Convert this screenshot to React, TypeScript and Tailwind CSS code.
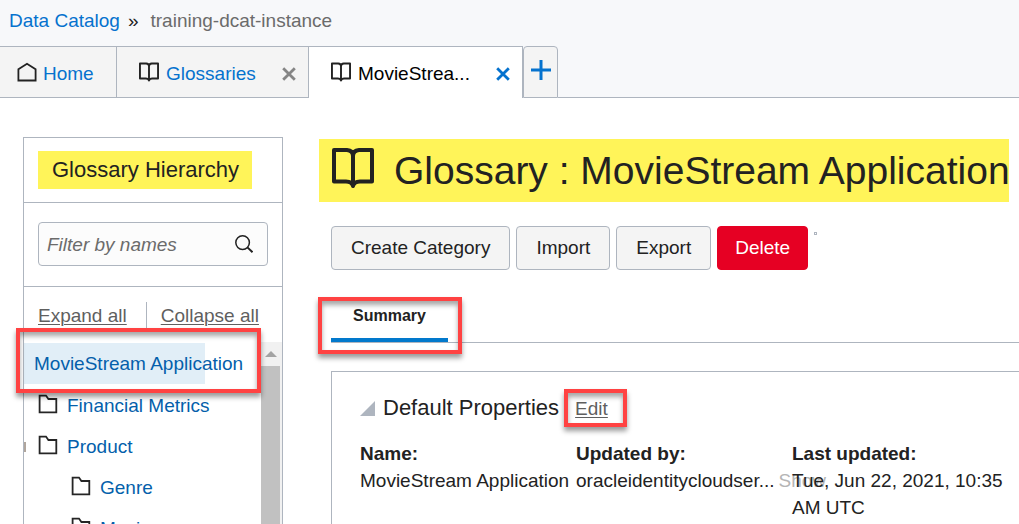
import type { ReactNode } from 'react';

function BookIcon({ className }: { className: string }) {
  return (
    <svg viewBox="0 0 42 40" className={className} fill="none" stroke="currentColor" strokeWidth="4" strokeLinejoin="round" strokeLinecap="round" aria-hidden="true">
      <path d="M2 2H15Q21 2.5 21 8Q21 2.5 27 2H40V33.5H28Q22 33.5 21 38Q20 33.5 14 33.5H2ZM21 8V37" />
    </svg>
  );
}

function HomeIcon() {
  return (
    <svg viewBox="0 0 20 20" className="mb-1 size-5 shrink-0" fill="none" stroke="currentColor" strokeWidth="1.8" aria-hidden="true">
      <path d="M1.4 18.5V7.2L10 1.8L18.6 7.2V18.5Z" />
    </svg>
  );
}

function FolderIcon() {
  return (
    <svg viewBox="0 0 20 20" className="mb-1 size-5 shrink-0 text-[#252525]" fill="none" stroke="currentColor" strokeWidth="1.8" aria-hidden="true">
      <path d="M1.6 18.4V1.6H8L10.4 5H18.3V18.4Z" />
    </svg>
  );
}

function SearchIcon() {
  return (
    <svg viewBox="0 0 18 18" className="size-[18px]" fill="none" stroke="currentColor" strokeWidth="1.5" aria-hidden="true">
      <circle cx="7.6" cy="7.6" r="6.8" />
      <path d="M12.4 12.4L17.5 17.2" strokeWidth="1.9" />
    </svg>
  );
}

function CrossIcon({ className }: { className: string }) {
  return (
    <svg viewBox="0 0 14 14" className={className} fill="none" stroke="currentColor" strokeWidth="2.8" aria-hidden="true">
      <path d="M1.2 1.2L12.8 12.8M12.8 1.2L1.2 12.8" />
    </svg>
  );
}

function Callout({ className }: { className: string }) {
  return (
    <span
      aria-hidden="true"
      className={`pointer-events-none absolute z-10 border-4 border-[#ff4242] shadow-[0_4px_5px_rgba(0,0,0,0.4),inset_0_4px_5px_rgba(0,0,0,0.35)] ${className}`}
    />
  );
}

function TreeRow({ label, nested }: { label: string; nested?: boolean }) {
  return (
    <li className={`flex h-[41px] items-center gap-[9px] ${nested ? 'pl-[47px]' : 'pl-[14px]'}`}>
      <FolderIcon />
      <a href="#" className="whitespace-nowrap text-[#045fab]">{label}</a>
    </li>
  );
}

function ActionButton({ children, danger }: { children: ReactNode; danger?: boolean }) {
  return (
    <button
      type="button"
      className={`h-11 rounded border pb-[2px] whitespace-nowrap ${danger ? 'border-[#e60023] bg-[#e60023] px-[17px] text-white' : 'border-[#aeb5bf] bg-[#f4f4f4] px-[19px]'}`}
    >
      {children}
    </button>
  );
}

function Header() {
  return (
    <header className="bg-[#f7f8fa]">
      <nav aria-label="Breadcrumb" className="flex h-[46px] items-start gap-2 pt-[7px] pl-[9px] leading-[27px]">
        <a href="#" className="text-[#0572ce]">Data Catalog</a>
        <span>»</span>
        <span className="ml-1 text-[#6b6b6b]">training-dcat-instance</span>
      </nav>
      <div className="flex h-[52px]">
        <div className="flex w-[117px] items-center gap-[6px] border-y border-r border-[#aeb5bf] bg-[#f4f4f4] pt-[3px] pl-[17px]">
          <HomeIcon />
          <a href="#" className="text-[#0572ce]">Home</a>
        </div>
        <div className="flex w-48 items-center border-y border-r border-[#aeb5bf] bg-[#f4f4f4] pt-[3px] pr-3 pl-[22px]">
          <BookIcon className="mb-1 h-5 w-5 shrink-0" />
          <a href="#" className="ml-[7px] text-[#0572ce]">Glossaries</a>
          <button type="button" aria-label="Close Glossaries" className="ml-auto text-[#858585]">
            <CrossIcon className="size-[14px]" />
          </button>
        </div>
        <div className="flex w-[214px] items-center border-t border-r border-[#aeb5bf] bg-white pt-[2px] pr-3 pl-[22px]">
          <BookIcon className="mb-1 h-5 w-5 shrink-0" />
          <a href="#" className="ml-[7px] text-black">MovieStrea...</a>
          <button type="button" aria-label="Close MovieStream Application" className="ml-auto text-[#0572ce]">
            <CrossIcon className="size-[14px]" />
          </button>
        </div>
        <button
          type="button"
          aria-label="New tab"
          className="flex w-[35px] justify-center rounded-t border border-[#aeb5bf] bg-[#f4f4f4] pt-[13px] text-[#0572ce]"
        >
          <svg viewBox="0 0 20 20" className="size-5" stroke="currentColor" strokeWidth="3" aria-hidden="true">
            <path d="M10 0V20M0 10H20" />
          </svg>
        </button>
        <div className="flex-1 border-b border-[#aeb5bf]" />
      </div>
    </header>
  );
}

function Sidebar() {
  return (
    <aside className="mt-[39px] flex w-[260px] shrink-0 flex-col border-x border-t border-[#aeb5bf]">
      <div className="border-b border-[#aeb5bf] px-[14px] py-[13px]">
        <h2 className="inline-block h-[38px] bg-[#fff459] pr-[13px] pl-[14px] text-[22px] leading-[38px] whitespace-nowrap align-top">
          Glossary Hierarchy
        </h2>
      </div>
      <div className="border-b border-[#aeb5bf] px-[14px] pt-[19px] pb-5">
        <div className="flex h-11 items-center rounded-sm border border-[#aeb5bf] bg-[#fcfcfc] pr-[14px] pl-2">
          <input
            type="text"
            aria-label="Filter by names"
            placeholder="Filter by names"
            className="min-w-0 flex-1 bg-transparent italic outline-none placeholder:text-[#6b6b6b]"
          />
          <button type="button" aria-label="Search"><SearchIcon /></button>
        </div>
      </div>
      <div className="flex h-[55px] items-start pt-[15px] pl-[14px] leading-[27px] whitespace-nowrap text-[#5f5f5f]">
        <a href="#" className="underline decoration-1 underline-offset-2">Expand all</a>
        <span className="mr-[14px] ml-[19px] h-7 w-px bg-[#aeb5bf]" />
        <a href="#" className="underline decoration-1 underline-offset-2">Collapse all</a>
      </div>
      <div className="flex min-h-0 flex-1">
        <ul className="min-w-0 flex-1">
          <li className="relative flex h-[43px] items-center">
            <a href="#" className="w-[181px] bg-[#e1eef7] pl-[10px] leading-[41px] whitespace-nowrap text-[#045fab]">
              MovieStream Application
            </a>
            <Callout className="-top-[14px] right-0 -bottom-2 -left-2" />
          </li>
          <TreeRow label="Financial Metrics" />
          <li className="relative">
            <span className="absolute top-4 left-0 h-[10px] w-[2px] bg-[#b0a69d]" />
            <ul>
              <TreeRow label="Product" />
            </ul>
          </li>
          <TreeRow label="Genre" nested />
          <TreeRow label="Movie" nested />
        </ul>
        <div className="flex w-[21px] flex-col bg-[#f1f1f1] pr-[2px]">
          <div className="flex h-6 items-center justify-center">
            <svg viewBox="0 0 12 6" className="h-[6px] w-3" fill="#a3a3a3" aria-hidden="true"><path d="M6 0L12 6H0Z" /></svg>
          </div>
          <div className="flex-1 bg-[#c1c1c1]" />
        </div>
      </div>
    </aside>
  );
}

function Property({ label, children }: { label: string; children: ReactNode }) {
  return (
    <div className="min-w-0">
      <dt className="font-bold">{label}</dt>
      <dd>{children}</dd>
    </div>
  );
}

function Main() {
  return (
    <main className="min-w-0 flex-1 pt-[41px] pl-9">
      <h1 className="mr-[10px] flex h-[63px] items-center gap-5 bg-[#fff459] pl-[13px] text-[39px] leading-[63px] whitespace-nowrap">
        <BookIcon className="mb-[5px] h-10 w-[42px] shrink-0" />
        Glossary : MovieStream Application
      </h1>
      <div className="mt-6 flex gap-[6px] pl-3">
        <ActionButton>Create Category</ActionButton>
        <ActionButton>Import</ActionButton>
        <ActionButton>Export</ActionButton>
        <ActionButton danger>Delete</ActionButton>
        <span className="mt-[6px] size-[3px] border border-[#aeb5bf]" />
      </div>
      <div role="tablist" className="mt-[27px] ml-3 flex h-[46px] border-b border-[#aeb5bf]">
        <div className="relative flex w-[117px]">
          <button type="button" role="tab" aria-selected="true" className="flex-1 border-b-4 border-[#0279cc] pb-1 text-base leading-[34px] font-bold">
            Summary
          </button>
          <Callout className="top-0 -right-[14px] -bottom-3 -left-[13px]" />
        </div>
      </div>
      <section className="mt-7 ml-3 h-full border-t border-l border-[#aeb5bf] pt-5 pr-[11px] pl-7">
        <div className="flex items-center">
          <svg viewBox="0 0 15 15" className="size-[15px]" fill="#aeb5bf" aria-hidden="true"><path d="M15 0V15H0Z" /></svg>
          <h2 className="ml-2 text-[22px] leading-8 whitespace-nowrap">Default Properties</h2>
          <span className="relative ml-4">
            <a href="#" className="text-[#5f5f5f] underline decoration-1 underline-offset-2">Edit</a>
            <Callout className="-top-[6px] -right-[19px] -bottom-[5px] -left-[11px]" />
          </span>
        </div>
        <dl className="mt-4 grid grid-cols-3 leading-[27px]">
          <Property label="Name:">
            <span className="whitespace-nowrap">MovieStream Application</span>
          </Property>
          <Property label="Updated by:">
            <span className="whitespace-nowrap">
              oracleidentitycloudser...<a href="#" className="ml-1 text-[#b5b5b5]">Show</a>
            </span>
          </Property>
          <Property label="Last updated:">Tue, Jun 22, 2021, 10:35 AM UTC</Property>
        </dl>
      </section>
    </main>
  );
}

export default function App() {
  return (
    <div className="flex h-screen flex-col overflow-hidden bg-white font-['Liberation_Sans',Arial,sans-serif] text-[19px] leading-[27px] text-[#222222]">
      <Header />
      <div className="flex min-h-0 flex-1 pl-[23px]">
        <Sidebar />
        <Main />
      </div>
    </div>
  );
}
